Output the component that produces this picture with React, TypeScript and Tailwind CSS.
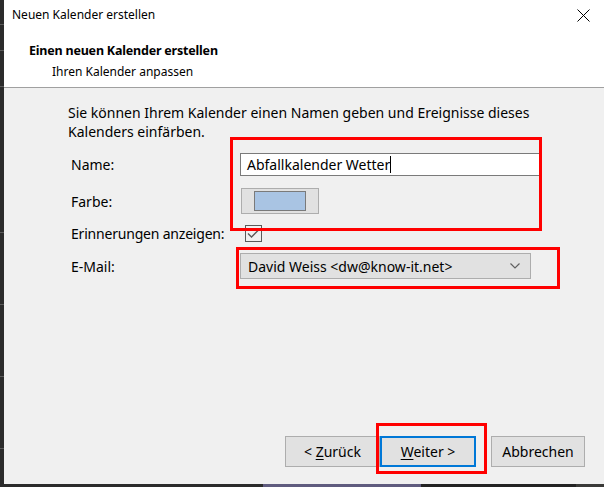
import React from "react";

const font = { fontFamily: '"Noto Sans", "Segoe UI", Arial, sans-serif' };

function Tick({ top }: { top: number }) {
  return <div className="absolute left-0 w-[4px] h-[1px] bg-[#5a5a5a]" style={{ top }} />;
}

export default function App() {
  return (
    <div className="relative w-[604px] h-[487px] bg-[#2b2b2b] overflow-hidden text-black" style={font}>
      <div className="flex h-[484px]">
        <div className="relative w-[4px] shrink-0 bg-[#2b2b2b]">
          <Tick top={24} />
          <Tick top={50} />
          <Tick top={86} />
          <Tick top={232} />
          <Tick top={304} />
          <Tick top={376} />
          <Tick top={448} />
        </div>
        <div className="flex-1 flex flex-col">
          {/* header */}
          <div className="h-[88px] bg-white border-b border-[#a0a0a0] flex flex-col">
            <div className="h-[30px] flex items-center justify-between pl-[8px] pr-[14px]">
              <span className="text-[12px] leading-none">Neuen Kalender erstellen</span>
              <svg width="13" height="13" viewBox="0 0 13 13" className="mt-[1px]">
                <path d="M0.5 0.5 L12.5 12.5 M12.5 0.5 L0.5 12.5" stroke="#000" strokeWidth="1" />
              </svg>
            </div>
            <div className="pl-[25px] mt-[11px] text-[12.5px] font-bold leading-[20px] tracking-[-0.2px]">Einen neuen Kalender erstellen</div>
            <div className="pl-[48px] mt-[1px] text-[12px] leading-[20px]">Ihren Kalender anpassen</div>
          </div>
          {/* body */}
          <div className="flex-1 bg-[#f0f0f0] flex flex-col text-[14px]">
            <div className="pl-[64px] pt-[15px] leading-[19px]">
              Sie können Ihrem Kalender einen Namen geben und Ereignisse dieses
              <br />
              Kalenders einfärben.
            </div>
            <div className="mt-[12px] pl-[67px] grid grid-cols-[169px_1fr] gap-y-[12px] items-center">
              <div className="leading-[23px]">Name:</div>
              <div className="h-[23px] w-[300px] bg-white border border-[#7a7a7a] flex items-center pl-[6px]">
                <span>Abfallkalender Wetter</span>
                <span className="w-[1px] h-[17px] bg-black" />
              </div>
              <div>Farbe:</div>
              <div className="h-[26px] w-[78px] ml-[1px] bg-[#e1e1e1] border border-[#adadad] flex items-center justify-center">
                <div className="w-[52px] h-[20px] bg-[#a9c4e3] border border-[#7a7a7a]" />
              </div>
            </div>
            <div className="mt-[10px] pl-[67px] grid grid-cols-[169px_1fr] gap-y-[10px] items-center">
              <div className="leading-[19px] tracking-[-0.2px]">Erinnerungen anzeigen:</div>
              <div className="h-[19px] flex items-center">
                <div className="ml-[5px] w-[17px] h-[17px] border border-[#5a5a5a] bg-[#f0f0f0] flex items-center justify-center">
                  <svg width="13" height="11" viewBox="0 0 13 11">
                    <path d="M1 5.5 L4.5 9 L12 1.5" fill="none" stroke="#5a5a5a" strokeWidth="1.3" />
                  </svg>
                </div>
              </div>
              <div>E-Mail:</div>
              <div className="h-[26px] w-[291px] bg-[#e1e1e1] border border-[#adadad] flex items-center justify-between pl-[7px] pr-[10px]">
                <span>David Weiss &lt;dw@know-it.net&gt;</span>
                <svg width="10" height="6" viewBox="0 0 10 6">
                  <path d="M0.5 0.5 L5 5 L9.5 0.5" fill="none" stroke="#606060" strokeWidth="1.2" />
                </svg>
              </div>
            </div>
            <div className="flex-1" />
            <div className="flex justify-end pr-[19px] pb-[17px] text-[14px]">
              <button className="w-[95px] h-[31px] bg-[#e1e1e1] border border-[#adadad]">
                &lt; <span className="underline underline-offset-2">Z</span>urück
              </button>
              <button className="w-[96px] h-[31px] bg-[#e1e1e1] border-2 border-[#0078d7]">
                <span className="underline underline-offset-2">W</span>eiter &gt;
              </button>
              <button className="ml-[15px] w-[94px] h-[31px] bg-[#e1e1e1] border border-[#adadad]">Abbrechen</button>
            </div>
          </div>
        </div>
      </div>
      {/* bottom taskbar strip */}
      <div className="flex h-[3px]">
        <div className="w-[263px] bg-[#2b2b2b]" />
        <div className="w-[158px] bg-[#5f5b7e]" />
        <div className="w-[155px] bg-[#232323]" />
        <div className="flex-1 bg-[#3a3a38]" />
      </div>
      {/* red annotation boxes */}
      <div className="absolute left-[230px] top-[137px] w-[312px] h-[94px] border-[3px] border-[#ff0000]" />
      <div className="absolute left-[236px] top-[247px] w-[324px] h-[42px] border-[3px] border-[#ff0000]" />
      <div className="absolute left-[376px] top-[423px] w-[111px] h-[51px] border-[3px] border-[#ff0000]" />
    </div>
  );
}
